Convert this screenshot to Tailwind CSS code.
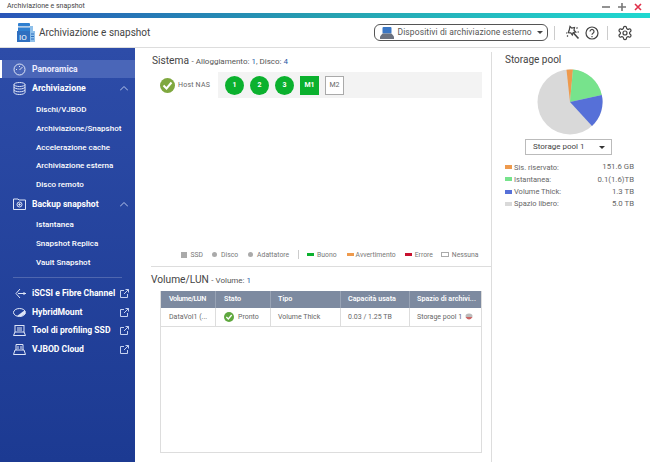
<!DOCTYPE html>
<html lang="it">
<head>
<meta charset="UTF-8">
<title>Archiviazione e snapshot</title>
<script src="https://cdn.jsdelivr.net/npm/@tailwindcss/browser@4"></script>
</head>
<body class="w-[650px] h-[462px] overflow-hidden bg-white font-['Roboto',sans-serif] text-[#555]">
<!-- Title bar -->
<div class="h-[13px] flex items-center justify-between pl-[7px] pr-[8px] bg-white">
  <span class="text-[7px] text-[#444]">Archiviazione e snapshot</span>
  <div class="flex items-center gap-[8px]">
    <svg width="8" height="8" viewBox="0 0 8 8"><path d="M0 4h8" stroke="#777" stroke-width="1.6"/></svg>
    <svg width="8" height="8" viewBox="0 0 8 8"><path d="M0 4h8M4 0v8" stroke="#777" stroke-width="1.6"/></svg>
    <svg width="8" height="8" viewBox="0 0 8 8"><path d="M1 1l6 6M7 1l-6 6" stroke="#e0304a" stroke-width="1.6"/></svg>
  </div>
</div>
<div class="h-[5px] bg-gradient-to-r from-[#2a55b8] via-[#26a0b0] to-[#1fd8d0]"></div>
<!-- Header -->
<header class="h-[30px] flex items-center border-b border-[#ddd] pl-[17px]">
  <svg width="18" height="19" viewBox="0 0 18 19" class="mr-[4px]">
    <rect x="1" y="0" width="12" height="3.500" rx="1" fill="#2f7fd0"/>
    <rect x="1" y="3.500" width="12" height="1" fill="#cfd8e6"/>
    <rect x="1" y="4.500" width="12" height="3.500" fill="#2f7fd0"/>
    <path d="M13 3h3v5h-3z" fill="#8fc0ea"/>
    <rect x="0" y="8" width="13" height="11" fill="#2f6fc0"/>
    <rect x="13" y="8" width="5" height="11" fill="#8fc0ea"/>
    <path d="M14 11h3M14 13.500h3M14 16h3" stroke="#2f6fc0"/>
    <text x="2" y="17" font-size="8" fill="#fff" font-family="Roboto">IO</text>
  </svg>
  <span class="text-[10px] text-[#444]">Archiviazione e snapshot</span>
  <div class="ml-auto flex items-center">
    <div class="w-[174px] h-[17px] border border-[#555] rounded-[6px] flex items-center pl-[5px] pr-[4px]">
      <svg width="14" height="12" viewBox="0 0 14 12" class="mr-[3.500px]"><rect x="2.500" y="0" width="9" height="6.500" rx="1" fill="#3a76c4"/><path d="M2.500 6.500h9l2.500 3v2.500H0V9.500z" fill="#6b7280"/></svg>
      <span class="text-[8.500px] text-[#555] tracking-[0.1px] whitespace-nowrap">Dispositivi di archiviazione esterno</span>
      <span class="ml-auto w-0 h-0 border-x-[3px] border-x-transparent border-t-[3px] border-t-[#444]"></span>
    </div>
    <div class="w-px h-[14px] bg-[#ccc] ml-[6px]"></div>
    <svg width="15" height="15" viewBox="0 0 15 15" class="ml-[10px]" fill="none" stroke="#444" stroke-width="1.200"><path d="M5 1.500l1.800 1.700 2.700-.7-.5 2.700 1.800 1.800-2.600.5-.9 2.500-1.500-2.200-2.600-.1 1-2.400z"/><path d="M8.500 8l5 5.500" stroke-width="1.600"/><path d="M11.500 3.500l1-1M12.500 7h1.500M2 11.500l1-1M1 8h1"/></svg>
    <svg width="14" height="14" viewBox="0 0 14 14" class="ml-[5px]" fill="none" stroke="#444" stroke-width="1.200"><circle cx="7" cy="7" r="6"/><path d="M5 5.400a2 2 0 1 1 3 1.800c-.7.400-1 .8-1 1.600"/><path d="M7 10v1.200"/></svg>
    <div class="w-px h-[14px] bg-[#ccc] ml-[8px]"></div>
    <svg width="16" height="16" viewBox="0 0 24 24" class="ml-[9px] mr-[17px]" fill="none" stroke="#444" stroke-width="1.800"><path d="M12.220 2h-.44a2 2 0 0 0-2 2v.18a2 2 0 0 1-1 1.730l-.43.25a2 2 0 0 1-2 0l-.15-.08a2 2 0 0 0-2.730.73l-.22.38a2 2 0 0 0 .73 2.730l.15.1a2 2 0 0 1 1 1.720v.51a2 2 0 0 1-1 1.740l-.15.09a2 2 0 0 0-.73 2.730l.22.38a2 2 0 0 0 2.730.73l.15-.08a2 2 0 0 1 2 0l.43.25a2 2 0 0 1 1 1.730V20a2 2 0 0 0 2 2h.44a2 2 0 0 0 2-2v-.18a2 2 0 0 1 1-1.730l.43-.25a2 2 0 0 1 2 0l.15.08a2 2 0 0 0 2.730-.73l.22-.39a2 2 0 0 0-.73-2.730l-.15-.08a2 2 0 0 1-1-1.740v-.5a2 2 0 0 1 1-1.740l.15-.09a2 2 0 0 0 .73-2.730l-.22-.38a2 2 0 0 0-2.730-.73l-.15.08a2 2 0 0 1-2 0l-.43-.25a2 2 0 0 1-1-1.730V4a2 2 0 0 0-2-2z"/><circle cx="12" cy="12" r="3"/></svg>
  </div>
</header>
<div class="flex h-[414px]">
  <!-- Sidebar -->
  <nav class="w-[135px] shrink-0 bg-gradient-to-b from-[#2d4ca8] to-[#1c3a92] pt-[12px] text-white text-[8px] font-medium">
    <div class="h-[18px] flex items-center bg-[#4a66b8] border-l-2 border-white pl-[11px] text-[8.500px] font-bold text-[#eef] mb-[1px]">
      <svg width="13" height="13" viewBox="0 0 13 13" fill="none" stroke="#dfe6f7" class="mr-[6px]"><circle cx="6.500" cy="6.500" r="5.500"/><path d="M6.500 7l3-3M3 6.500h1M6.500 3v1"/></svg>Panoramica
    </div>
    <div class="h-[19px] flex items-center pl-[13px] pr-[7px] text-[8.800px] font-bold">
      <svg width="13" height="13" viewBox="0 0 13 13" fill="none" stroke="#dfe6f7" class="mr-[6px]"><ellipse cx="6.500" cy="2.500" rx="5.500" ry="2"/><path d="M1 2.500v8c0 1 2.500 2 5.500 2s5.500-1 5.500-2v-8M1 5c0 1 2.500 2 5.500 2S12 6 12 5M1 7.800c0 1 2.500 2 5.500 2s5.500-1 5.500-2"/></svg>Archiviazione
      <svg width="8" height="5" viewBox="0 0 8 5" fill="none" stroke="#b8c6ea" class="ml-auto"><path d="M0 4.500l4-4 4 4"/></svg>
    </div>
    <div class="pl-[36px] flex flex-col pt-[3px]">
      <a class="h-[18.700px] flex items-center">Dischi/VJBOD</a>
      <a class="h-[18.700px] flex items-center">Archiviazione/Snapshot</a>
      <a class="h-[18.700px] flex items-center">Accelerazione cache</a>
      <a class="h-[18.700px] flex items-center">Archiviazione esterna</a>
      <a class="h-[18.700px] flex items-center">Disco remoto</a>
    </div>
    <div class="h-[19px] mt-[0.500px] flex items-center pl-[13px] pr-[7px] text-[8.600px] font-bold">
      <svg width="13" height="12" viewBox="0 0 13 12" fill="none" stroke="#dfe6f7" class="mr-[6px]"><path d="M1 1h4l1 1h6.500v9.500H.5V1z"/><circle cx="6.500" cy="6.500" r="2.500"/><circle cx="6.500" cy="6.500" r=".8" fill="#dfe6f7"/></svg>Backup snapshot
      <svg width="8" height="5" viewBox="0 0 8 5" fill="none" stroke="#b8c6ea" class="ml-auto"><path d="M0 4.500l4-4 4 4"/></svg>
    </div>
    <div class="pl-[36px] flex flex-col pt-[2px]">
      <a class="h-[18.700px] flex items-center">Istantanea</a>
      <a class="h-[18.700px] flex items-center">Snapshot Replica</a>
      <a class="h-[18.700px] flex items-center">Vault Snapshot</a>
    </div>
    <div class="h-px bg-white/20 mx-[13px] mt-[5px] mb-[6px]"></div>
    <div class="flex flex-col text-[8.600px] font-bold whitespace-nowrap">
      <div class="h-[18.700px] flex items-center pl-[15px] pr-[6px]">
        <svg width="11" height="11" viewBox="0 0 11 11" fill="none" stroke="#dfe6f7" class="mr-[6px]"><path d="M5 1L1 5.500 5 10M3 5.500h8M9 4v3"/></svg>iSCSI e Fibre Channel
        <svg width="9" height="9" viewBox="0 0 9 9" fill="none" stroke="#c6d2f0" class="ml-auto shrink-0"><path d="M7.500 5v3.500h-7v-7H4M4 5l4.500-4.500M5.500.5h3v3"/></svg>
      </div>
      <div class="h-[18.700px] flex items-center pl-[13px] pr-[6px]">
        <svg width="13" height="9" viewBox="0 0 13 9" class="mr-[6px]"><ellipse cx="6.500" cy="4.500" rx="6" ry="4" fill="none" stroke="#dfe6f7"/><path d="M4 8l8-6v4l-4 2.500z" fill="#dfe6f7"/></svg>HybridMount
        <svg width="9" height="9" viewBox="0 0 9 9" fill="none" stroke="#c6d2f0" class="ml-auto"><path d="M7.500 5v3.500h-7v-7H4M4 5l4.500-4.500M5.500.5h3v3"/></svg>
      </div>
      <div class="h-[18.700px] flex items-center pl-[13px] pr-[6px]">
        <svg width="13" height="11" viewBox="0 0 13 11" fill="none" stroke="#dfe6f7" class="mr-[6px]"><rect x="2" y=".5" width="9" height="6.500"/><path d="M2 7L.5 10.500h12L11 7M4 3h5M4 5h5"/></svg>Tool di profiling SSD
        <svg width="9" height="9" viewBox="0 0 9 9" fill="none" stroke="#c6d2f0" class="ml-auto"><path d="M7.500 5v3.500h-7v-7H4M4 5l4.500-4.500M5.500.5h3v3"/></svg>
      </div>
      <div class="h-[18.700px] flex items-center pl-[13px] pr-[6px]">
        <svg width="13" height="11" viewBox="0 0 13 11" fill="none" stroke="#dfe6f7" class="mr-[6px]"><path d="M3 6V.5h7V6M.5 10.500L2 6h9l1.500 4.500zM5 2v3M8 2v3"/></svg>VJBOD Cloud
        <svg width="9" height="9" viewBox="0 0 9 9" fill="none" stroke="#c6d2f0" class="ml-auto"><path d="M7.500 5v3.500h-7v-7H4M4 5l4.500-4.500M5.500.5h3v3"/></svg>
      </div>
    </div>
  </nav>
  <!-- Centre -->
  <main class="w-[356px] shrink-0 flex flex-col">
    <section class="h-[219px] border-b border-[#ddd] ml-[16px] pt-[6px] flex flex-col">
      <h2 class="pl-[1px] text-[10.200px] leading-[14px] text-[#444] whitespace-nowrap">Sistema <span class="text-[8px] text-[#555]">- Alloggiamento: <b class="font-normal text-[#2b5aa8]">1</b>, Disco: <b class="font-normal text-[#2b5aa8]">4</b></span></h2>
      <div class="flex h-[26px] mt-[3px] mr-[9px]">
        <div class="w-[67px] flex items-center pl-[9px] gap-[3px] text-[7px] text-[#666] tracking-[0.2px] whitespace-nowrap">
          <svg width="15" height="15" viewBox="0 0 15 15"><circle cx="7.500" cy="7.500" r="7.500" fill="#7fa83f"/><path d="M3.500 7.500l3 3 5-6" fill="none" stroke="#fff" stroke-width="2"/></svg>Host NAS
        </div>
        <div class="flex-1 bg-[#f3f3f3] flex items-center pl-[7px] gap-[6px] text-[7px] font-bold text-white">
          <span class="w-[19px] h-[19px] rounded-full bg-[#0bb12e] flex items-center justify-center">1</span>
          <span class="w-[19px] h-[19px] rounded-full bg-[#0bb12e] flex items-center justify-center">2</span>
          <span class="w-[19px] h-[19px] rounded-full bg-[#0bb12e] flex items-center justify-center">3</span>
          <span class="w-[19px] h-[19px] bg-[#0bb12e] flex items-center justify-center">M1</span>
          <span class="w-[19px] h-[19px] bg-white border border-[#aaa] text-[#666] font-normal flex items-center justify-center">M2</span>
        </div>
      </div>
      <div class="mt-auto mb-[6px] flex items-center pl-[30px] text-[6.800px] text-[#777] whitespace-nowrap">
        <span class="w-[6px] h-[6px] bg-[#aaa] mr-[3.500px]"></span>SSD
        <span class="w-[5px] h-[5px] rounded-full bg-[#aaa] ml-[9px] mr-[4px]"></span>Disco
        <span class="w-[5px] h-[5px] rounded-full bg-[#aaa] ml-[10px] mr-[4px]"></span>Adattatore
        <span class="w-px h-[9px] bg-[#ccc] ml-[9px] mr-[8px]"></span>
        <span class="w-[7px] h-[3px] bg-[#0bb12e] mr-[3px]"></span>Buono
        <span class="w-[7px] h-[3px] bg-[#ee9a4d] ml-[10px] mr-[2px]"></span>Avvertimento
        <span class="w-[7px] h-[3px] bg-[#c8102e] ml-[9px] mr-[3px]"></span>Errore
        <span class="w-[8px] h-[5px] border border-[#aaa] ml-[8px] mr-[3px]"></span>Nessuna
      </div>
    </section>
    <section class="pl-[16px] pt-[6px] flex-1 flex flex-col">
      <h2 class="text-[10.200px] leading-[14px] text-[#444] whitespace-nowrap">Volume/LUN <span class="text-[8px] text-[#555]">- Volume: <b class="font-normal text-[#2b5aa8]">1</b></span></h2>
      <div class="ml-[9px] mr-[9px] mt-[3px] h-[162px] border border-[#ddd] border-t-0">
        <div class="flex h-[17px] bg-[#7d8aa0] text-white text-[7.200px] font-semibold whitespace-nowrap">
          <span class="w-[55px] pl-[8px] flex items-center border-r border-[#98a3b5] tracking-[-0.4px]">Volume/LUN</span>
          <span class="w-[55px] pl-[8px] flex items-center border-r border-[#98a3b5]">Stato</span>
          <span class="w-[70px] pl-[7px] flex items-center border-r border-[#98a3b5]">Tipo</span>
          <span class="w-[69px] pl-[7px] flex items-center border-r border-[#98a3b5]">Capacità usata</span>
          <span class="flex-1 pl-[7px] flex items-center">Spazio di archivi...</span>
        </div>
        <div class="flex h-[19px] border-b border-[#ddd] text-[7px] text-[#666] whitespace-nowrap">
          <span class="w-[55px] pl-[8px] flex items-center border-r border-[#ddd]">DataVol1 (...</span>
          <span class="w-[55px] pl-[8px] flex items-center gap-[4px] border-r border-[#ddd]"><svg width="10" height="10" viewBox="0 0 15 15"><circle cx="7.500" cy="7.500" r="7.500" fill="#5fa83f"/><path d="M3.500 7.500l3 3 5-6" fill="none" stroke="#fff" stroke-width="2"/></svg>Pronto</span>
          <span class="w-[70px] pl-[7px] flex items-center border-r border-[#ddd]">Volume Thick</span>
          <span class="w-[69px] pl-[7px] flex items-center border-r border-[#ddd]">0.03 / 1.25 TB</span>
          <span class="flex-1 pl-[7px] flex items-center gap-[3px]">Storage pool 1 <svg width="8" height="8" viewBox="0 0 8 8"><ellipse cx="4" cy="3" rx="3.500" ry="2.500" fill="#bbb"/><path d="M.5 4Q4 9 7.500 4z" fill="#c66"/></svg></span>
        </div>
      </div>
    </section>
  </main>
  <!-- Storage pool -->
  <aside class="flex-1 mt-[4px] border-l border-[#ddd] pl-[13px] pr-[16px] text-[7.500px] text-[#666]">
    <h2 class="mt-[1px] text-[10px] leading-[14px] text-[#444]">Storage pool</h2>
    <svg width="66" height="66" viewBox="0 0 66 66" class="mt-[2px] ml-[32px]">
      <circle cx="33" cy="33" r="32.500" fill="#d9d9d9"/>
      <path d="M33 33L29.500 .7A32.500 32.500 0 0 1 36 .6z" fill="#ee9a4d"/>
      <path d="M33 33L36 .6A32.500 32.500 0 0 1 64.800 26z" fill="#77e38c"/>
      <path d="M33 33L64.800 26A32.500 32.500 0 0 1 55 57z" fill="#5670d8"/>
    </svg>
    <div class="mt-[4px] ml-[20px] w-[87px] h-[16px] border border-[#bbb] flex items-center pl-[7px] pr-[6px] text-[8px] text-[#444]">
      Storage pool 1
      <span class="ml-auto w-0 h-0 border-x-[3px] border-x-transparent border-t-[3px] border-t-[#333]"></span>
    </div>
    <dl class="mt-[6px] flex flex-col">
      <div class="h-[12.300px] flex items-center"><span class="w-[7px] h-[4px] bg-[#ee9a4d] mr-[2px]"></span><dt>Sis. riservato:</dt><dd class="ml-auto text-[7.800px]">151.6 GB</dd></div>
      <div class="h-[12.300px] flex items-center"><span class="w-[7px] h-[4px] bg-[#77e38c] mr-[2px]"></span><dt>Istantanea:</dt><dd class="ml-auto text-[7.800px]">0.1(1.6)TB</dd></div>
      <div class="h-[12.300px] flex items-center"><span class="w-[7px] h-[4px] bg-[#5670d8] mr-[2px]"></span><dt>Volume Thick:</dt><dd class="ml-auto text-[7.800px]">1.3 TB</dd></div>
      <div class="h-[12.300px] flex items-center"><span class="w-[7px] h-[4px] bg-[#d9d9d9] mr-[2px]"></span><dt>Spazio libero:</dt><dd class="ml-auto text-[7.800px]">5.0 TB</dd></div>
    </dl>
  </aside>
</div>
</body>
</html>
